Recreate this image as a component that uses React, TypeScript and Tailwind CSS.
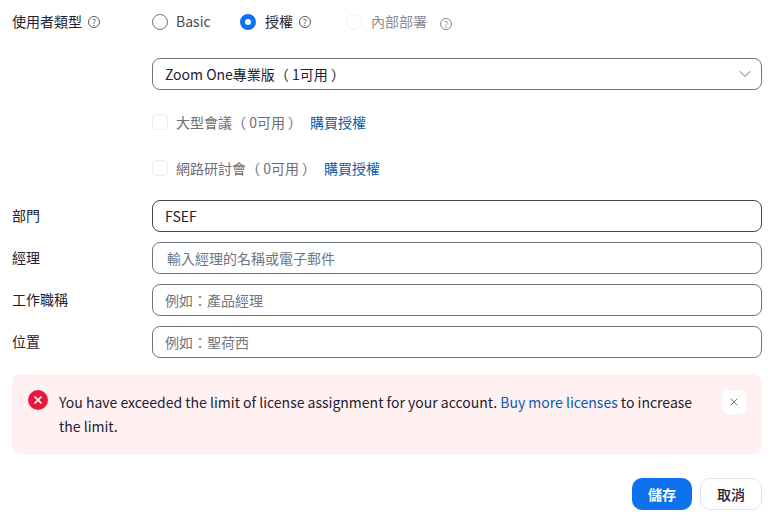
import { X, ChevronDown } from 'lucide-react'

const FONT = "font-['Noto_Sans_CJK_TC','Noto_Sans',sans-serif]"

function Help({ faded }: { faded?: boolean }) {
    return (
        <span className={`inline-flex items-center justify-center w-[12px] h-[12px] rounded-full border text-[9px] leading-none ${faded ? 'border-[#8b8b95] text-[#8b8b95]' : 'border-[#55555f] text-[#55555f]'}`}>
            ?
        </span>
    )
}

function Field({ label, placeholder, value, indent }: { label: string, placeholder?: string, value?: string, indent?: boolean }) {
    return (
        <div className="flex items-center h-[32px]">
            <div className="w-[140px] -mt-[2px] text-[14px] text-[#222230]">{label}</div>
            <div className={`flex-1 h-[32px] flex items-center rounded-[8px] border bg-white text-[14px] ${indent ? 'pl-[14px]' : 'pl-[12px]'} ${value ? 'text-[#222230] border-[#444450]' : 'text-[#6e7680] border-[#6e7680]'}`}>
                {value ?? placeholder}
            </div>
        </div>
    )
}

function LicenseCheck({ label }: { label: string }) {
    return (
        <div className="flex items-center h-[16px] text-[14px]">
            <span className="w-[16px] h-[16px] rounded-[4px] border border-[#ededf0] bg-white"></span>
            <span className="ml-[8px] text-[#6e6e78]">{label}</span>
            <a className="ml-[8px] text-[#0b5cad]">購買授權</a>
        </div>
    )
}

export default function App() {
    return (
        <div lang="zh-TW" className={`${FONT} w-[772px] h-[517px] bg-white pl-[12px] pr-[10px] overflow-hidden`}>
            {/* user type */}
            <div className="flex items-center h-[16px] mt-[14px]">
                <div className="w-[140px] flex items-center gap-[6px] text-[14px] text-[#222230]">
                    <span className="-mt-[2px]">使用者類型</span> <Help />
                </div>
                <div className="flex items-center text-[14px]">
                    <span className="w-[16px] h-[16px] rounded-full border border-[#6e7680]"></span>
                    <span className="ml-[8px] -mt-[2px] w-[34px] text-[#4a4a55]">Basic</span>
                    <span className="ml-[30px] w-[16px] h-[16px] rounded-full border-[5px] border-[#0e72ed]"></span>
                    <span className="ml-[9px] mr-[6px] -mt-[2px] text-[#222230]">授權</span>
                    <Help />
                    <span className="ml-[35px] w-[16px] h-[16px] rounded-full border border-[#f1f1f3]"></span>
                    <span className="ml-[9px] -mt-[2px] text-[#8b8b95]">內部部署</span>
                    <span className="ml-[13px]"><Help faded /></span>
                </div>
            </div>

            {/* plan select */}
            <div className="ml-[140px] mt-[28px] h-[32px] flex items-center justify-between rounded-[8px] border border-[#6e7680] pl-[12px] pr-[6px] text-[14px] text-[#222230]">
                <span>Zoom One專業版（ 1可用 ）</span>
                <ChevronDown size={20} strokeWidth={1.2} className="text-[#6e6e78]" />
            </div>

            <div className="ml-[140px] mt-[24px] flex flex-col gap-[30px]">
                <LicenseCheck label="大型會議（ 0可用 ）" />
                <LicenseCheck label="網路研討會（ 0可用 ）" />
            </div>

            <div className="mt-[24px] flex flex-col gap-[10px]">
                <Field label="部門" value="FSEF" />
                <Field label="經理" placeholder="輸入經理的名稱或電子郵件" indent />
                <Field label="工作職稱" placeholder="例如：產品經理" />
                <Field label="位置" placeholder="例如：聖荷西" />
            </div>

            {/* license error */}
            <div className="mt-[16px] h-[80px] rounded-[8px] bg-[#fff0f2] flex items-start pl-[16px] pr-[16px] pt-[16px]">
                <span className="w-[20px] h-[20px] rounded-full bg-[#e8173e] flex items-center justify-center shrink-0 text-white">
                    <X size={12} strokeWidth={3.5} />
                </span>
                <p className="ml-[11px] w-[650px] text-[14px] leading-[24px] text-[#222230]">
                    You have exceeded the limit of license assignment for your account. <a className="text-[#0b5cad]">Buy more licenses</a> to increase the limit.
                </p>
                <button className="ml-auto w-[24px] h-[24px] rounded-[6px] bg-white flex items-center justify-center shrink-0 text-[#444450]">
                    <X size={12} strokeWidth={1.5} />
                </button>
            </div>

            <div className="mt-[24px] flex justify-end gap-[8px]">
                <button className="w-[60px] h-[32px] rounded-[10px] bg-[#0e72ed] text-white text-[14px] font-bold">儲存</button>
                <button className="w-[62px] h-[32px] rounded-[10px] border border-[#dfe3e8] bg-white text-[#222230] text-[14px] font-medium">取消</button>
            </div>
        </div>
    )
}
